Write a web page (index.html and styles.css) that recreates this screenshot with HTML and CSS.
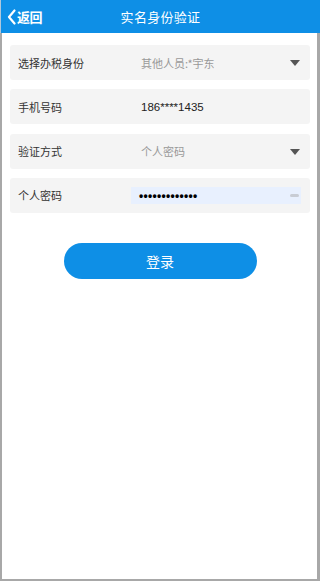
FILE: index.html
```html
<!DOCTYPE html>
<html lang="zh">
<head>
<meta charset="utf-8">
<link rel="stylesheet" href="styles.css">
</head>
<body>
<div class="app">
  <header class="topbar">
    <div class="back">
      <svg class="chev" width="9" height="16" viewBox="0 0 9 16"><path d="M7.5 1.5 L2 8 L7.5 14.5" fill="none" stroke="#fff" stroke-width="2.2" stroke-linecap="round" stroke-linejoin="round"/></svg>
      <span>返回</span>
    </div>
    <div class="title">实名身份验证</div>
  </header>
  <main class="content">
    <div class="row">
      <span class="label">选择办税身份</span>
      <span class="value muted">其他人员:*宇东</span>
      <span class="caret"></span>
    </div>
    <div class="row">
      <span class="label">手机号码</span>
      <span class="value dark">186****1435</span>
    </div>
    <div class="row">
      <span class="label">验证方式</span>
      <span class="value muted">个人密码</span>
      <span class="caret"></span>
    </div>
    <div class="row">
      <span class="label">个人密码</span>
      <div class="pwd">
        <span class="dots">•••••••••••••</span>
        <span class="eye"></span>
      </div>
    </div>
    <div class="btnwrap">
      <button class="login">登录</button>
    </div>
  </main>
</div>
</body>
</html>
```
FILE: styles.css
```css
* { box-sizing: border-box; }
html, body { margin: 0; padding: 0; }
body {
  width: 320px;
  height: 581px;
  overflow: hidden;
  background: #fff;
  font-family: "Noto Sans CJK SC", "Microsoft YaHei", sans-serif;
}
.app {
  width: 320px;
  height: 581px;
  display: flex;
  flex-direction: column;
}
.topbar {
  height: 33px;
  background: #0e8fe6;
  display: flex;
  align-items: center;
  justify-content: center;
  position: relative;
  color: #fff;
  border-left: 1px solid #b0c8dc;
}
.back {
  position: absolute;
  left: 6px;
  top: 0;
  height: 33px;
  display: flex;
  align-items: center;
  font-size: 13px;
  font-weight: 700;
  letter-spacing: -0.5px;
}
.back .chev { margin-right: 1px; }
.title {
  font-size: 13px;
  letter-spacing: 0.3px;
}
.content {
  flex: 1;
  border-left: 2px solid #a8a8a8;
  border-right: 3px solid #a8a8a8;
  border-bottom: 2px solid #a8a8a8;
  padding: 12px 7px 0 8px;
  display: flex;
  flex-direction: column;
  gap: 9.3px;
}
.row {
  height: 35px;
  background: #f4f4f4;
  border-radius: 3px;
  display: flex;
  align-items: center;
  padding-left: 8px;
  padding-right: 10px;
  font-size: 11px;
}
.label {
  width: 113px;
  color: #333;
  flex: none;
}
.value { flex: 1; padding-left: 10px; }
.muted { color: #999; }
.dark { color: #222; font-family: "Liberation Sans", "Noto Sans CJK SC", sans-serif; font-size: 11.5px; padding-left: 10px; }
.caret {
  width: 0; height: 0;
  border-left: 5px solid transparent;
  border-right: 5px solid transparent;
  border-top: 6px solid #555;
  margin-top: 1px;
}
.pwd {
  flex: none;
  width: 170px;
  height: 17px;
  background: #e8f0fe;
  display: flex;
  align-items: center;
  justify-content: space-between;
  padding-left: 8px;
  padding-right: 2px;
  margin-top: 1px;
}
.dots {
  font-family: "Liberation Sans", sans-serif;
  font-size: 12px;
  font-weight: 700;
  letter-spacing: 0.3px;
  color: #000;
}
.eye {
  width: 9px;
  height: 3px;
  border-radius: 2px;
  background: #c8ccd4;
}
.btnwrap {
  display: flex;
  justify-content: center;
  padding-top: 21px;
}
.login {
  width: 193px;
  height: 36px;
  border: none;
  border-radius: 18px;
  background: #0e8fe6;
  color: #fff;
  font-size: 14px;
  font-family: "Noto Sans CJK SC", sans-serif;
  padding: 0;
}
```
